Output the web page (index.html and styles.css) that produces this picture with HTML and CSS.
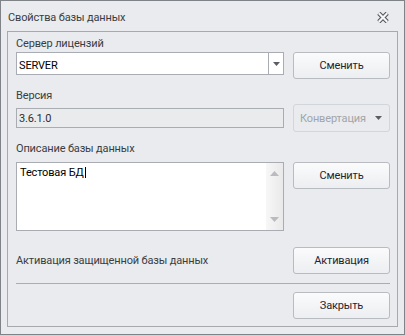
FILE: index.html
```html
<!DOCTYPE html>
<html lang="ru">
<head>
<meta charset="utf-8">
<link rel="stylesheet" href="styles.css">
</head>
<body>
<div class="window">
  <div class="titlebar">
    <span class="title">Свойства базы данных</span>
    <svg class="close" width="12" height="11" viewBox="0 0 12 11">
      <path d="M1.8 1.3 L10.2 9.7 M10.2 1.3 L1.8 9.7" stroke="#55585d" stroke-width="4.4" stroke-linecap="butt"/>
      <path d="M1.8 1.3 L10.2 9.7 M10.2 1.3 L1.8 9.7" stroke="#f6f7f8" stroke-width="2.2" stroke-linecap="butt"/>
    </svg>
  </div>
  <div class="panel">
    <div class="label l1">Сервер лицензий</div>
    <div class="row r1">
      <div class="combo">
        <span class="combo-text">SERVER</span>
        <span class="combo-btn"><svg width="7" height="4" viewBox="0 0 7 4"><path d="M0 0H7L3.5 4Z" fill="#5a5d62"/></svg></span>
      </div>
      <button class="btn">Сменить</button>
    </div>
    <div class="label l2">Версия</div>
    <div class="row r2">
      <div class="field">3.6.1.0</div>
      <button class="btn disabled"><span>Конвертация</span><svg width="7" height="4" viewBox="0 0 7 4"><path d="M0 0H7L3.5 4Z" fill="#5a5d62"/></svg></button>
    </div>
    <div class="label l3">Описание базы данных</div>
    <div class="row r3">
      <div class="memo">
        <div class="memo-text">Тестовая БД<span class="caret"></span></div>
        <div class="memo-scroll">
          <svg width="9" height="5" viewBox="0 0 9 5"><path d="M0 5H9L4.5 0Z" fill="#b9bbbe"/></svg>
          <svg width="9" height="5" viewBox="0 0 9 5"><path d="M0 0H9L4.5 5Z" fill="#b9bbbe"/></svg>
        </div>
      </div>
      <button class="btn">Сменить</button>
    </div>
    <div class="row r4">
      <span class="text">Активация защищенной базы данных</span>
      <button class="btn">Активация</button>
    </div>
    <div class="sep"></div>
    <div class="row r5">
      <button class="btn">Закрыть</button>
    </div>
  </div>
</div>
</body>
</html>
```

FILE: styles.css
```css
* { box-sizing: border-box; }
html, body { margin: 0; padding: 0; }
body {
  width: 405px;
  height: 335px;
  font-family: Roboto, "Liberation Sans", sans-serif;
  font-size: 11px;
  letter-spacing: -0.15px;
  color: #3a3d42;
}
.window {
  width: 405px;
  height: 335px;
  border: 1px solid #7f8388;
  background: #e9ebee;
}
.titlebar {
  height: 30px;
  padding: 3px 15px 0 7px;
  display: flex;
  align-items: center;
  justify-content: space-between;
}
.title { color: #3a3d42; line-height: 15px; }
.close { display: block; }
.panel {
  margin: 0 6px;
  height: 296px;
  border: 1px solid #a6aaaf;
  padding: 3px 7px 7px 8px;
  display: flex;
  flex-direction: column;
}
.label { line-height: 15px; height: 15px; white-space: nowrap; }
.row { display: flex; justify-content: space-between; }
.l1 { margin-top: 1px; }
.r1 { margin-top: 1px; align-items: flex-start; }
.l2 { margin-top: 9px; }
.r2 { margin-top: 1px; align-items: center; height: 28px; }
.l3 { margin-top: 9px; }
.r3 { margin-top: 6px; align-items: flex-start; }
.r4 { margin-top: 16px; align-items: center; }
.sep { margin-top: 9px; height: 1px; background: #a9adb2; }
.r5 { margin-top: 8px; justify-content: flex-end; }

.btn {
  width: 97px;
  height: 27px;
  border: 1px solid #b8bbc0;
  border-radius: 3px;
  background: linear-gradient(#fbfbfc, #eceef1);
  font-family: inherit;
  font-size: 11px;
  letter-spacing: -0.15px;
  color: #1f2530;
  padding: 0;
  margin: 0;
  line-height: 15px;
}
.r2 .btn { height: 28px; }
.btn.disabled {
  background: #e9ebee;
  border-color: #d2d5d9;
  color: #a1a5aa;
  display: flex;
  align-items: center;
  justify-content: space-between;
  padding: 0 7px 0 6px;
}
.combo {
  width: 268px;
  height: 23px;
  border: 1px solid #a9adb3;
  background: #fff;
  display: flex;
  color: #000;
}
.combo-text {
  flex: 1;
  padding: 5px 0 0 2px;
  line-height: 15px;
}
.combo-btn {
  width: 15px;
  border-left: 1px solid #a9adb3;
  display: flex;
  align-items: center;
  justify-content: center;
}
.combo-btn svg { display: block; margin-left: 1px; }
.field {
  width: 268px;
  height: 20px;
  border: 1px solid #a9acb1;
  background: #eaebed;
  color: #2a2d31;
  padding: 2px 0 0 2px;
  line-height: 15px;
}
.memo {
  width: 268px;
  height: 69px;
  border: 1px solid #a9adb3;
  background: #fff;
  display: flex;
  color: #000;
}
.memo-text {
  flex: 1;
  padding: 2px 0 0 3px;
  line-height: 15px;
}
.caret {
  display: inline-block;
  width: 1px;
  height: 11px;
  background: #000;
  vertical-align: -2px;
  margin-left: 1px;
}
.memo-scroll {
  width: 17px;
  background: linear-gradient(to right, #f7f7f7, #e9e9ea);
  display: flex;
  flex-direction: column;
  align-items: center;
  justify-content: space-between;
  padding: 8px 0 8px 0;
}
.memo-scroll svg { display: block; }
.text { line-height: 15px; }
```
